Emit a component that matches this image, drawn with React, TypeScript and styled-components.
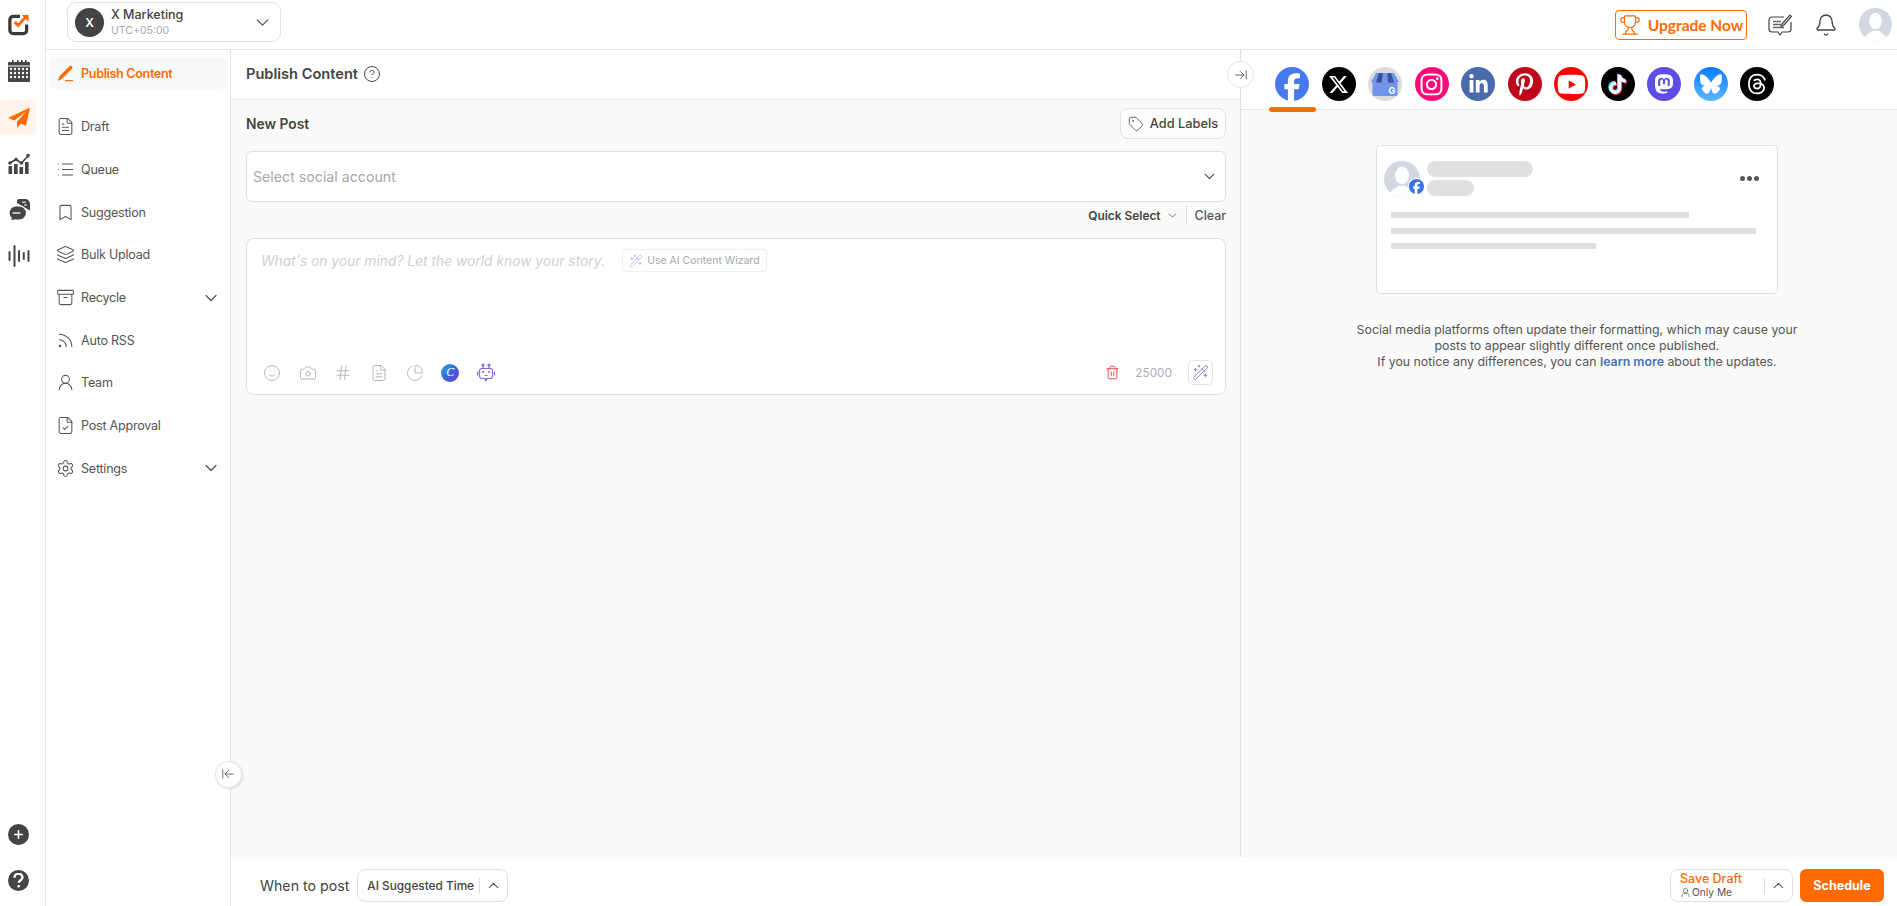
import React from "react";
import styled, { createGlobalStyle } from "styled-components";
import {
  ArrowLeftToLine, ArrowRightToLine, Archive, Bell, Bookmark, Camera, ChartPie, ChevronDown, ChevronUp, CircleHelp,
  FileCheck, FileText, Hash, Layers, List, Plus, Rss, Settings, Smile, Tag, Trash2, Trophy, UserRound, WandSparkles,
} from "lucide-react";
import {
  FaFacebook, FaXTwitter, FaInstagram, FaLinkedinIn, FaPinterestP, FaYoutube, FaTiktok, FaMastodon, FaBluesky, FaThreads,
} from "react-icons/fa6";

const Global = createGlobalStyle`
  html, body { margin: 0; padding: 0; background: #fff; }
  * { box-sizing: border-box; }
  body { font-family: "Inter", "Liberation Sans", sans-serif; color: #444; }
  #root { height: 906px; overflow: hidden; }
`;

const Page = styled.div`display: flex; height: 906px; width: 1897px;`;

const Rail = styled.nav`
  width: 46px; flex: none; border-right: 1px solid #e4e4e4; background: #fff;
  display: flex; flex-direction: column; gap: 11.4px; padding: 7px 0 8px;
`;
const RailItem = styled.div<{ $active?: boolean }>`
  width: 36px; height: 35px; display: flex; align-items: center; justify-content: center; color: #444; flex: none;
  padding-left: 1px;
  background: ${(p) => (p.$active ? "#fff3ea" : "transparent")};
  border-radius: ${(p) => (p.$active ? "0 5px 5px 0" : "0")};
`;
const RailSpacer = styled.div`flex: 1;`;
const RoundGlyph = styled.span`
  width: 21px; height: 21px; border-radius: 50%; background: #444; color: #fff;
  display: flex; align-items: center; justify-content: center;
`;

const Main = styled.div`flex: 1; min-width: 0; display: flex; flex-direction: column;`;
const Topbar = styled.header`
  height: 50px; flex: none; border-bottom: 1px solid #e6e6e6; background: #fff;
  display: flex; align-items: center; justify-content: space-between; padding: 0 5px 0 21px;
`;
const AccountSelect = styled.div`
  width: 214px; height: 40px; margin-top: -5px; border: 1px solid #e2e2e2; border-radius: 9px; background: #fff;
  display: flex; align-items: center; padding: 0 7px 0 7px; gap: 7px; color: #555;
`;
const AccountAvatar = styled.span`
  width: 29px; height: 29px; border-radius: 50%; background: #444; color: #fff; flex: none;
  display: flex; align-items: center; justify-content: center; font-size: 12px; font-weight: 600;
`;
const AccountText = styled.div`flex: 1; display: flex; flex-direction: column; gap: 2px;`;
const AccountName = styled.span`font-size: 12.5px; line-height: 15px; font-weight: 500; color: #444;`;
const AccountZone = styled.span`font-size: 10.5px; line-height: 13px; color: #a3a9b6;`;

const TopActions = styled.div`display: flex; align-items: center;`;
const UpgradeButton = styled.button`
  width: 132px; height: 30px; border: 1px solid #ff6b00; border-radius: 4px; background: #fff; color: #ff6b00;
  display: flex; align-items: center; justify-content: center; gap: 7px; padding: 0;
  font-family: "Lato", sans-serif; font-size: 15.5px; font-weight: 700;
`;
const TopIcon = styled.span<{ $left: number }>`
  display: flex; color: #444; margin-left: ${(p) => p.$left}px;
`;
const AvatarWrap = styled.span<{ $size: number }>`
  display: block; width: ${(p) => p.$size}px; height: ${(p) => p.$size}px; border-radius: 50%; overflow: hidden; flex: none;
`;

const Body = styled.div`flex: 1; min-height: 0; display: flex; position: relative;`;
const Sidebar = styled.aside`
  width: 185px; flex: none; border-right: 1px solid #e4e4e4; background: #fff; padding: 7px 3px 0;
`;
const NavActive = styled.div`
  height: 32px; background: #f8f9fb; border-radius: 6px; display: flex; align-items: center; gap: 7px;
  padding-left: 8px; margin-bottom: 16.5px; color: #ff6b00; font-size: 12.6px; font-weight: 600; letter-spacing: -0.35px;
`;
const NavRow = styled.div`
  height: 42.7px; display: flex; align-items: center; gap: 6px; padding-left: 7px; padding-right: 6px;
  color: #555; font-size: 12.6px; font-weight: 400; letter-spacing: -0.25px;
  svg { flex: none; }
`;
const NavLabel = styled.span`flex: 1;`;

const Workspace = styled.div`flex: 1; min-width: 0; display: flex; flex-direction: column;`;
const Columns = styled.div`flex: 1; min-height: 0; display: flex;`;
const EditorCol = styled.section`
  width: 1010px; flex: none; border-right: 1px solid #e0e0e0; background: #fafafa; display: flex; flex-direction: column;
`;
const EditorHead = styled.div`
  height: 50px; flex: none; background: #fff; border-bottom: 1px solid #e4e4e4; padding-left: 15px; padding-bottom: 1px;
  display: flex; align-items: center; gap: 5px; font-size: 14.6px; font-weight: 600; color: #444;
`;
const EditorBody = styled.div`padding: 8px 14px 0 15px;`;
const PostHead = styled.div`display: flex; align-items: center; justify-content: space-between; height: 31px; margin-bottom: 12px;`;
const PostTitle = styled.span`font-size: 13.8px; font-weight: 600; color: #444;`;
const LabelButton = styled.button`
  width: 106px; height: 31px; border: 1px solid #e2e2e2; border-radius: 8px; background: #fdfdfd; color: #444; padding: 0;
  display: flex; align-items: center; justify-content: center; gap: 6px;
  font-family: inherit; font-size: 12.8px; font-weight: 500;
`;
const AccountField = styled.div`
  height: 51px; border: 1px solid #e2e2e2; border-radius: 6px; background: #fff; padding: 0 7px 0 6px;
  display: flex; align-items: center; justify-content: space-between; color: #a8a8a8; font-size: 14.2px;
`;
const QuickRow = styled.div`
  height: 26px; margin-bottom: 10px; display: flex; align-items: center; justify-content: flex-end;
  font-size: 12.4px; font-weight: 500; color: #555;
`;
const QuickLabel = styled.span`font-weight: 600; color: #444; font-size: 11.9px;`;
const QuickDivider = styled.span`width: 1px; height: 18px; background: #ddd; margin: 0 8px 0 7px;`;
const Composer = styled.div`
  height: 157px; border: 1px solid #e0e0e0; border-radius: 8px; background: #fff; padding: 10px 12px 9px 12px;
  display: flex; flex-direction: column; justify-content: space-between;
`;
const ComposerTop = styled.div`display: flex; align-items: center; gap: 17px; padding-left: 2px;`;
const Placeholder = styled.span`font-size: 13.8px; font-style: italic; color: #cfcfcf; white-space: nowrap;`;
const WizardChip = styled.span`
  height: 23px; width: 145px; border: 1px solid #eee; border-radius: 4px; display: flex; align-items: center;
  justify-content: center; gap: 4px; font-size: 10.5px; color: #a9a9a9;
`;
const ComposerBottom = styled.div`display: flex; align-items: center; margin-left: -5px; height: 25px;`;
const ToolSlot = styled.span`width: 35.7px; display: flex; justify-content: center; flex: none; color: #a8a8a8;`;
const CanvaBadge = styled.span`
  width: 18px; height: 18px; border-radius: 50%; background: linear-gradient(135deg, #19b3cf 0%, #3c5fdc 55%, #6a3fd8 100%);
  color: #fff; font-family: "Liberation Serif", serif; font-style: italic; font-size: 12px; font-weight: 400;
  display: flex; align-items: center; justify-content: center;
`;
const Counter = styled.div`margin-left: auto; display: flex; align-items: center; color: #a9adb5; font-size: 11.8px;`;
const CountText = styled.span`margin: 0 16px 0 15px;`;
const MagicButton = styled.span`
  width: 25px; height: 25px; border: 1px solid #e3e3e3; border-radius: 5px; display: flex; align-items: center; justify-content: center;
  color: #8173d8;
`;

const PreviewCol = styled.section`flex: 1; min-width: 0; background: #fafafa; display: flex; flex-direction: column;`;
const TabBar = styled.div`
  height: 60px; flex: none; background: #fff; border-bottom: 1px solid #e4e4e4; padding: 17px 0 0 34px;
  display: flex; align-items: flex-start; gap: 12.5px;
`;
const Social = styled.span<{ $bg: string; $active?: boolean }>`
  width: 34px; height: 34px; border-radius: 50%; background: ${(p) => p.$bg}; color: #fff; flex: none; position: relative;
  display: flex; align-items: center; justify-content: center;
  &::after {
    content: "";
    display: ${(p) => (p.$active ? "block" : "none")};
    position: absolute; left: -6px; right: -7px; top: 40px; height: 5px; border-radius: 3px; background: #ff6b00;
  }
`;
const TikTokGlyph = styled.span`
  display: flex; filter: drop-shadow(-1px -1px 0 #25f4ee) drop-shadow(1px 1px 0 #fe2c55);
`;
const PreviewStack = styled.div`
  width: 402px; margin: 35px 0 0 135px; display: flex; flex-direction: column; align-items: center;
`;
const PreviewCard = styled.div`
  width: 402px; height: 149px; background: #fff; border: 1px solid #e0e0e0; border-radius: 4px; padding: 15px 0 0 7px;
`;
const CardHead = styled.div`display: flex; gap: 7px; position: relative;`;
const BadgeDot = styled.span`
  position: absolute; left: 24px; top: 17px; width: 17px; height: 17px; border-radius: 50%; background: #fff; color: #3b72e8;
  display: flex; align-items: center; justify-content: center;
`;
const BarStack = styled.div`display: flex; flex-direction: column; gap: 3px;`;
const Pill = styled.span<{ $w: number }>`display: block; height: 16px; width: ${(p) => p.$w}px; border-radius: 8px; background: #e0e0e0;`;
const MoreDots = styled.span`display: flex; gap: 2px; margin: 15px 18px 0 auto; align-self: flex-start;`;
const MoreDot = styled.i`display: block; width: 5px; height: 5px; border-radius: 50%; background: #555;`;
const CardLines = styled.div`margin: 15px 0 0 7px; display: flex; flex-direction: column; gap: 9.5px;`;
const SkeletonLine = styled.span<{ $w: number }>`display: block; height: 6px; width: ${(p) => p.$w}px; background: #e0e0e0;`;
const Notice = styled.p`
  margin: 28px 0 0; flex: none; width: 460px; text-align: center; font-size: 12.35px; line-height: 16px; color: #555; white-space: nowrap;
`;
const NoticeLink = styled.b`color: #4a6fb5; font-weight: 600;`;

const Footer = styled.footer`
  height: 49px; flex: none; background: #fff; padding: 8px 13px 0 29px; display: flex; align-items: center;
`;
const WhenLabel = styled.span`font-size: 14.2px; color: #444; margin-right: 8px;`;
const TimeSelect = styled.div`
  width: 151px; height: 33px; border: 1px solid #e0e0e0; border-radius: 8px; padding-left: 9px;
  display: flex; align-items: center; font-size: 11.8px; font-weight: 500; color: #444; white-space: nowrap;
`;
const SelectSplit = styled.span`width: 1px; height: 16px; background: #ddd; margin-left: auto;`;
const SelectArrow = styled.span`width: 27px; display: flex; justify-content: center; color: #555;`;
const FooterSpacer = styled.div`flex: 1;`;
const DraftSelect = styled.div`
  width: 123px; height: 33px; border: 1px solid #e0e0e0; border-radius: 8px; padding-left: 9px; margin-right: 7px;
  display: flex; align-items: center;
`;
const DraftText = styled.div`display: flex; flex-direction: column;`;
const DraftTitle = styled.span`font-size: 12.5px; line-height: 14px; font-weight: 500; color: #ff6b00;`;
const DraftWho = styled.span`font-size: 10.2px; line-height: 13px; color: #555; display: flex; align-items: center; gap: 1px;`;
const ScheduleButton = styled.button`
  width: 84px; height: 33px; border: 0; border-radius: 6px; background: #ff6b00; color: #fff; padding: 0;
  font-family: inherit; font-size: 12.5px; font-weight: 700;
`;
const EdgeToggle = styled.button<{ $left: number; $top: number; $shadow?: boolean }>`
  position: absolute; left: ${(p) => p.$left}px; top: ${(p) => p.$top}px; width: 27px; height: 27px; border-radius: 50%;
  background: #fff; border: 1px solid #e4e4e4; color: #444; padding: 0; z-index: 3;
  display: flex; align-items: center; justify-content: center;
  box-shadow: ${(p) => (p.$shadow ? "1px 1px 3px rgba(0,0,0,.12)" : "none")};
`;

const Logo = () => (
  <svg width="23" height="23" viewBox="0 0 24 24" fill="none">
    <path d="M13.5 3.500H6.500A3.500 3.500 0 0 0 3 7v11a3.500 3.500 0 0 0 3.500 3.500H17a3.500 3.500 0 0 0 3.500-3.500v-6" stroke="#3a3a3a" strokeWidth="3.400" />
    <path d="M8 9.500l3.600 3.400L20 3.500" stroke="#ff6b00" strokeWidth="3" />
    <path d="M15.500 2h7v7z" fill="#ff6b00" />
  </svg>
);
const CalendarGlyph = () => (
  <svg width="22" height="22" viewBox="0 0 22 22">
    <rect x="0" y="2" width="22" height="20" rx="1" fill="#444" />
    <rect x="0" y="5.500" width="22" height="1" fill="#fff" />
    {[4, 9, 13, 17].map((x) => <rect key={x} x={x} y="0" width="1.600" height="4" fill="#444" />)}
    {[9, 13, 17].map((y) => [3, 7, 11, 15, 19].map((x) => <circle key={`${x}-${y}`} cx={x} cy={y} r="1.200" fill="#fff" />))}
  </svg>
);
const PlaneGlyph = () => (
  <svg width="24" height="24" viewBox="0 0 24 24">
    <path d="M23 2.500 1 13l6.500 2.400L19 6.500 10 16.800V23l3.600-4.600 5.400 2z" fill="#ff6b00" />
  </svg>
);
const ChartGlyph = () => (
  <svg width="22" height="22" viewBox="0 0 22 22" fill="#444">
    <rect x="0.500" y="13" width="3.600" height="8" /><rect x="6" y="11" width="3.600" height="10" />
    <rect x="11.500" y="14" width="3.600" height="7" /><rect x="17" y="9" width="3.600" height="12" />
    <path d="M2 10 8 6.500l5.500 3.500L20 3" stroke="#444" strokeWidth="1.600" fill="none" />
    <circle cx="2" cy="10" r="1.800" /><circle cx="8" cy="6.500" r="1.800" /><circle cx="13.500" cy="10" r="1.800" /><circle cx="20" cy="2.600" r="1.800" />
  </svg>
);
const ChatGlyph = () => (
  <svg width="22" height="22" viewBox="0 0 22 22">
    <path d="M9 1.500C9 .8 10 0 11 0h6a5 5 0 0 1 5 5v3.500l.2 3-3-1.600L9 4z" fill="#444" />
    <path d="M7.500 7h4a7 7 0 0 1 0 14H6l-3.500 1 .7-3A7 7 0 0 1 7.500 7z" fill="#444" stroke="#fff" strokeWidth="1.200" />
    <path d="M4.500 14h8" stroke="#fff" strokeWidth="1.300" /><path d="M14 3.200h4M16 6h3" stroke="#fff" strokeWidth="1" />
  </svg>
);
const WaveGlyph = () => (
  <svg width="22" height="22" viewBox="0 0 22 22" stroke="#444" strokeWidth="2" strokeLinecap="round">
    <path d="M1.500 7v8M6.500 1v20M11 6v10M15.800 8v6M20.500 6v10" />
  </svg>
);
const PenGlyph = () => (
  <svg width="17" height="17" viewBox="0 0 17 17" fill="#ff6b00">
    <path d="M12.500 1.200c.7-.7 1.800-.6 2.500.1s.7 1.800 0 2.500L5.300 13.600 1 16l1.500-4.700z" />
    <rect x="8" y="15" width="8" height="1.300" rx=".6" />
  </svg>
);
const Silhouette = ({ size }: { size: number }) => (
  <AvatarWrap $size={size}>
    <svg width={size} height={size} viewBox="0 0 24 24">
      <rect width="24" height="24" fill="#d3d7e0" />
      <ellipse cx="12" cy="9.500" rx="4.600" ry="6" fill="#fff" />
      <path d="M3.500 24c.3-5 4.500-5.600 6-7.500h5c1.500 1.900 5.700 2.500 6 7.500z" fill="#fff" />
    </svg>
  </AvatarWrap>
);
const NoteGlyph = () => (
  <svg width="24" height="26" viewBox="0 0 24 26" fill="none" stroke="#444" strokeWidth="1.200">
    <path d="M16 5H4a3 3 0 0 0-3 3v9a3 3 0 0 0 3 3h6l2 3 2-3h6a3 3 0 0 0 3-3v-7" />
    <path d="M5 9.500h8M5 12.500h8M5 15.500h11" strokeWidth="1.600" stroke="#666" />
    <path d="M14 12l8-9 1.500 1.500-8 9-2.300.8z" fill="#fff" />
  </svg>
);
const RobotGlyph = () => (
  <svg width="20" height="20" viewBox="0 0 20 20" fill="none" stroke="#8a66d9" strokeWidth="1.200">
    <rect x="3.500" y="5.500" width="13" height="10" rx="2.500" />
    <path d="M1.500 8.500v4M18.500 8.500v4M7 3v2.500M13 3v2.500M9 15.500l1 2.500 1-2.500" />
    <circle cx="7" cy="2" r="1" /><circle cx="13" cy="2" r="1" />
    <path d="M6 9.500l1-1 1 1M12 9.500l1-1 1 1M8.500 12.500h3" />
  </svg>
);
const StoreGlyph = () => (
  <svg width="34" height="34" viewBox="0 0 34 34">
    <rect x="4.500" y="12" width="25" height="17" rx="1.500" fill="#6f94ea" />
    <path d="M8 6h18l5 9H3z" fill="#6f94ea" />
    <path d="M11 6h3.600l-.8 9.500H8zM19.400 6H23l3 9.500h-5.800z" fill="#3c4f9f" />
    <text x="24" y="27" fontSize="9" fontWeight="700" fill="#fff" textAnchor="middle" fontFamily="Inter, sans-serif">G</text>
  </svg>
);
const HelpMark = () => (
  <svg width="13" height="15" viewBox="0 0 13 15" fill="none" stroke="#fff" strokeWidth="2.400">
    <path d="M2.500 4.800A4 4 0 0 1 10.500 4.500c0 2.600-3.800 2.700-3.800 5.300" />
    <circle cx="6.700" cy="13.200" r="1.300" fill="#fff" stroke="none" />
  </svg>
);

const navItems = [
  { label: "Draft", icon: <FileText size={19} strokeWidth={1.3} /> },
  { label: "Queue", icon: <List size={19} strokeWidth={1.3} /> },
  { label: "Suggestion", icon: <Bookmark size={19} strokeWidth={1.3} /> },
  { label: "Bulk Upload", icon: <Layers size={19} strokeWidth={1.3} /> },
  { label: "Recycle", icon: <Archive size={19} strokeWidth={1.3} />, more: true },
  { label: "Auto RSS", icon: <Rss size={19} strokeWidth={1.3} /> },
  { label: "Team", icon: <UserRound size={19} strokeWidth={1.3} /> },
  { label: "Post Approval", icon: <FileCheck size={19} strokeWidth={1.3} /> },
  { label: "Settings", icon: <Settings size={19} strokeWidth={1.3} />, more: true },
];

export default function App() {
  return (
    <Page>
      <Global />
      <Rail>
        <RailItem><Logo /></RailItem>
        <RailItem><CalendarGlyph /></RailItem>
        <RailItem $active><PlaneGlyph /></RailItem>
        <RailItem><ChartGlyph /></RailItem>
        <RailItem><ChatGlyph /></RailItem>
        <RailItem><WaveGlyph /></RailItem>
        <RailSpacer />
        <RailItem><RoundGlyph><Plus size={13} strokeWidth={3} /></RoundGlyph></RailItem>
        <RailItem><RoundGlyph><HelpMark /></RoundGlyph></RailItem>
      </Rail>
      <Main>
        <Topbar>
          <AccountSelect>
            <AccountAvatar>X</AccountAvatar>
            <AccountText>
              <AccountName>X Marketing</AccountName>
              <AccountZone>UTC+05:00</AccountZone>
            </AccountText>
            <ChevronDown size={21} strokeWidth={1.5} />
          </AccountSelect>
          <TopActions>
            <UpgradeButton><Trophy size={22} strokeWidth={1.3} />Upgrade Now</UpgradeButton>
            <TopIcon $left={21}><NoteGlyph /></TopIcon>
            <TopIcon $left={22}><Bell size={24} strokeWidth={1.35} /></TopIcon>
            <TopIcon $left={21}><Silhouette size={33} /></TopIcon>
          </TopActions>
        </Topbar>
        <Body>
          <Sidebar>
            <NavActive><PenGlyph />Publish Content</NavActive>
            {navItems.map((item) => (
              <NavRow key={item.label}>
                {item.icon}
                <NavLabel>{item.label}</NavLabel>
                {item.more && <ChevronDown size={20} strokeWidth={1.5} />}
              </NavRow>
            ))}
          </Sidebar>
          <EdgeToggle $left={168.5} $top={710.5} $shadow><ArrowLeftToLine size={14} strokeWidth={1.3} /></EdgeToggle>
          <EdgeToggle $left={1181} $top={11}><ArrowRightToLine size={14} strokeWidth={1.4} /></EdgeToggle>
          <Workspace>
            <Columns>
              <EditorCol>
                <EditorHead>Publish Content <CircleHelp size={18} strokeWidth={1.3} /></EditorHead>
                <EditorBody>
                  <PostHead>
                    <PostTitle>New Post</PostTitle>
                    <LabelButton><Tag size={16} strokeWidth={1.2} />Add Labels</LabelButton>
                  </PostHead>
                  <AccountField>Select social account<ChevronDown size={17} strokeWidth={1.5} color="#444" /></AccountField>
                  <QuickRow>
                    <QuickLabel>Quick Select</QuickLabel>
                    <ChevronDown size={13} strokeWidth={1.5} style={{ marginLeft: 5 }} />
                    <QuickDivider />
                    Clear
                  </QuickRow>
                  <Composer>
                    <ComposerTop>
                      <Placeholder>What's on your mind? Let the world know your story.</Placeholder>
                      <WizardChip><WandSparkles size={14} strokeWidth={1.1} color="#a79be6" />Use AI Content Wizard</WizardChip>
                    </ComposerTop>
                    <ComposerBottom>
                      <ToolSlot><Smile size={18} strokeWidth={1.1} /></ToolSlot>
                      <ToolSlot><Camera size={18} strokeWidth={1.1} /></ToolSlot>
                      <ToolSlot><Hash size={18} strokeWidth={1.1} /></ToolSlot>
                      <ToolSlot><FileText size={18} strokeWidth={1.1} /></ToolSlot>
                      <ToolSlot><ChartPie size={18} strokeWidth={1.1} /></ToolSlot>
                      <ToolSlot><CanvaBadge>C</CanvaBadge></ToolSlot>
                      <ToolSlot><RobotGlyph /></ToolSlot>
                      <Counter>
                        <Trash2 size={15} strokeWidth={1.5} color="#f0404a" />
                        <CountText>25000</CountText>
                        <MagicButton><WandSparkles size={17} strokeWidth={1.3} /></MagicButton>
                      </Counter>
                    </ComposerBottom>
                  </Composer>
                </EditorBody>
              </EditorCol>
              <PreviewCol>
                <TabBar>
                  <Social $bg="#fff" $active><FaFacebook size={34} color="#4678ee" /></Social>
                  <Social $bg="#000"><FaXTwitter size={21} /></Social>
                  <Social $bg="#dcdcdc"><StoreGlyph /></Social>
                  <Social $bg="#ff0a78"><FaInstagram size={25} /></Social>
                  <Social $bg="#4a6aad"><FaLinkedinIn size={21} /></Social>
                  <Social $bg="#bd081c"><FaPinterestP size={23} /></Social>
                  <Social $bg="#ff0000"><FaYoutube size={29} /></Social>
                  <Social $bg="#000"><TikTokGlyph><FaTiktok size={19} /></TikTokGlyph></Social>
                  <Social $bg="#5c4ee5"><FaMastodon size={22} /></Social>
                  <Social $bg="linear-gradient(180deg,#0a7aff,#59b9ff)"><FaBluesky size={22} /></Social>
                  <Social $bg="#000"><FaThreads size={22} /></Social>
                </TabBar>
                <PreviewStack>
                  <PreviewCard>
                    <CardHead>
                      <Silhouette size={36} />
                      <BadgeDot><FaFacebook size={15} /></BadgeDot>
                      <BarStack>
                        <Pill $w={106} />
                        <Pill $w={47} />
                      </BarStack>
                      <MoreDots><MoreDot /><MoreDot /><MoreDot /></MoreDots>
                    </CardHead>
                    <CardLines>
                      <SkeletonLine $w={298} />
                      <SkeletonLine $w={365} />
                      <SkeletonLine $w={205} />
                    </CardLines>
                  </PreviewCard>
                  <Notice>
                    Social media platforms often update their formatting, which may cause your<br />
                    posts to appear slightly different once published.<br />
                    If you notice any differences, you can <NoticeLink>learn more</NoticeLink> about the updates.
                  </Notice>
                </PreviewStack>
              </PreviewCol>
            </Columns>
            <Footer>
              <WhenLabel>When to post</WhenLabel>
              <TimeSelect>
                AI Suggested Time
                <SelectSplit />
                <SelectArrow><ChevronUp size={17} strokeWidth={1.5} /></SelectArrow>
              </TimeSelect>
              <FooterSpacer />
              <DraftSelect>
                <DraftText>
                  <DraftTitle>Save Draft</DraftTitle>
                  <DraftWho><UserRound size={11} strokeWidth={1.5} />Only Me</DraftWho>
                </DraftText>
                <SelectSplit />
                <SelectArrow><ChevronUp size={17} strokeWidth={1.5} /></SelectArrow>
              </DraftSelect>
              <ScheduleButton>Schedule</ScheduleButton>
            </Footer>
          </Workspace>
        </Body>
      </Main>
    </Page>
  );
}
